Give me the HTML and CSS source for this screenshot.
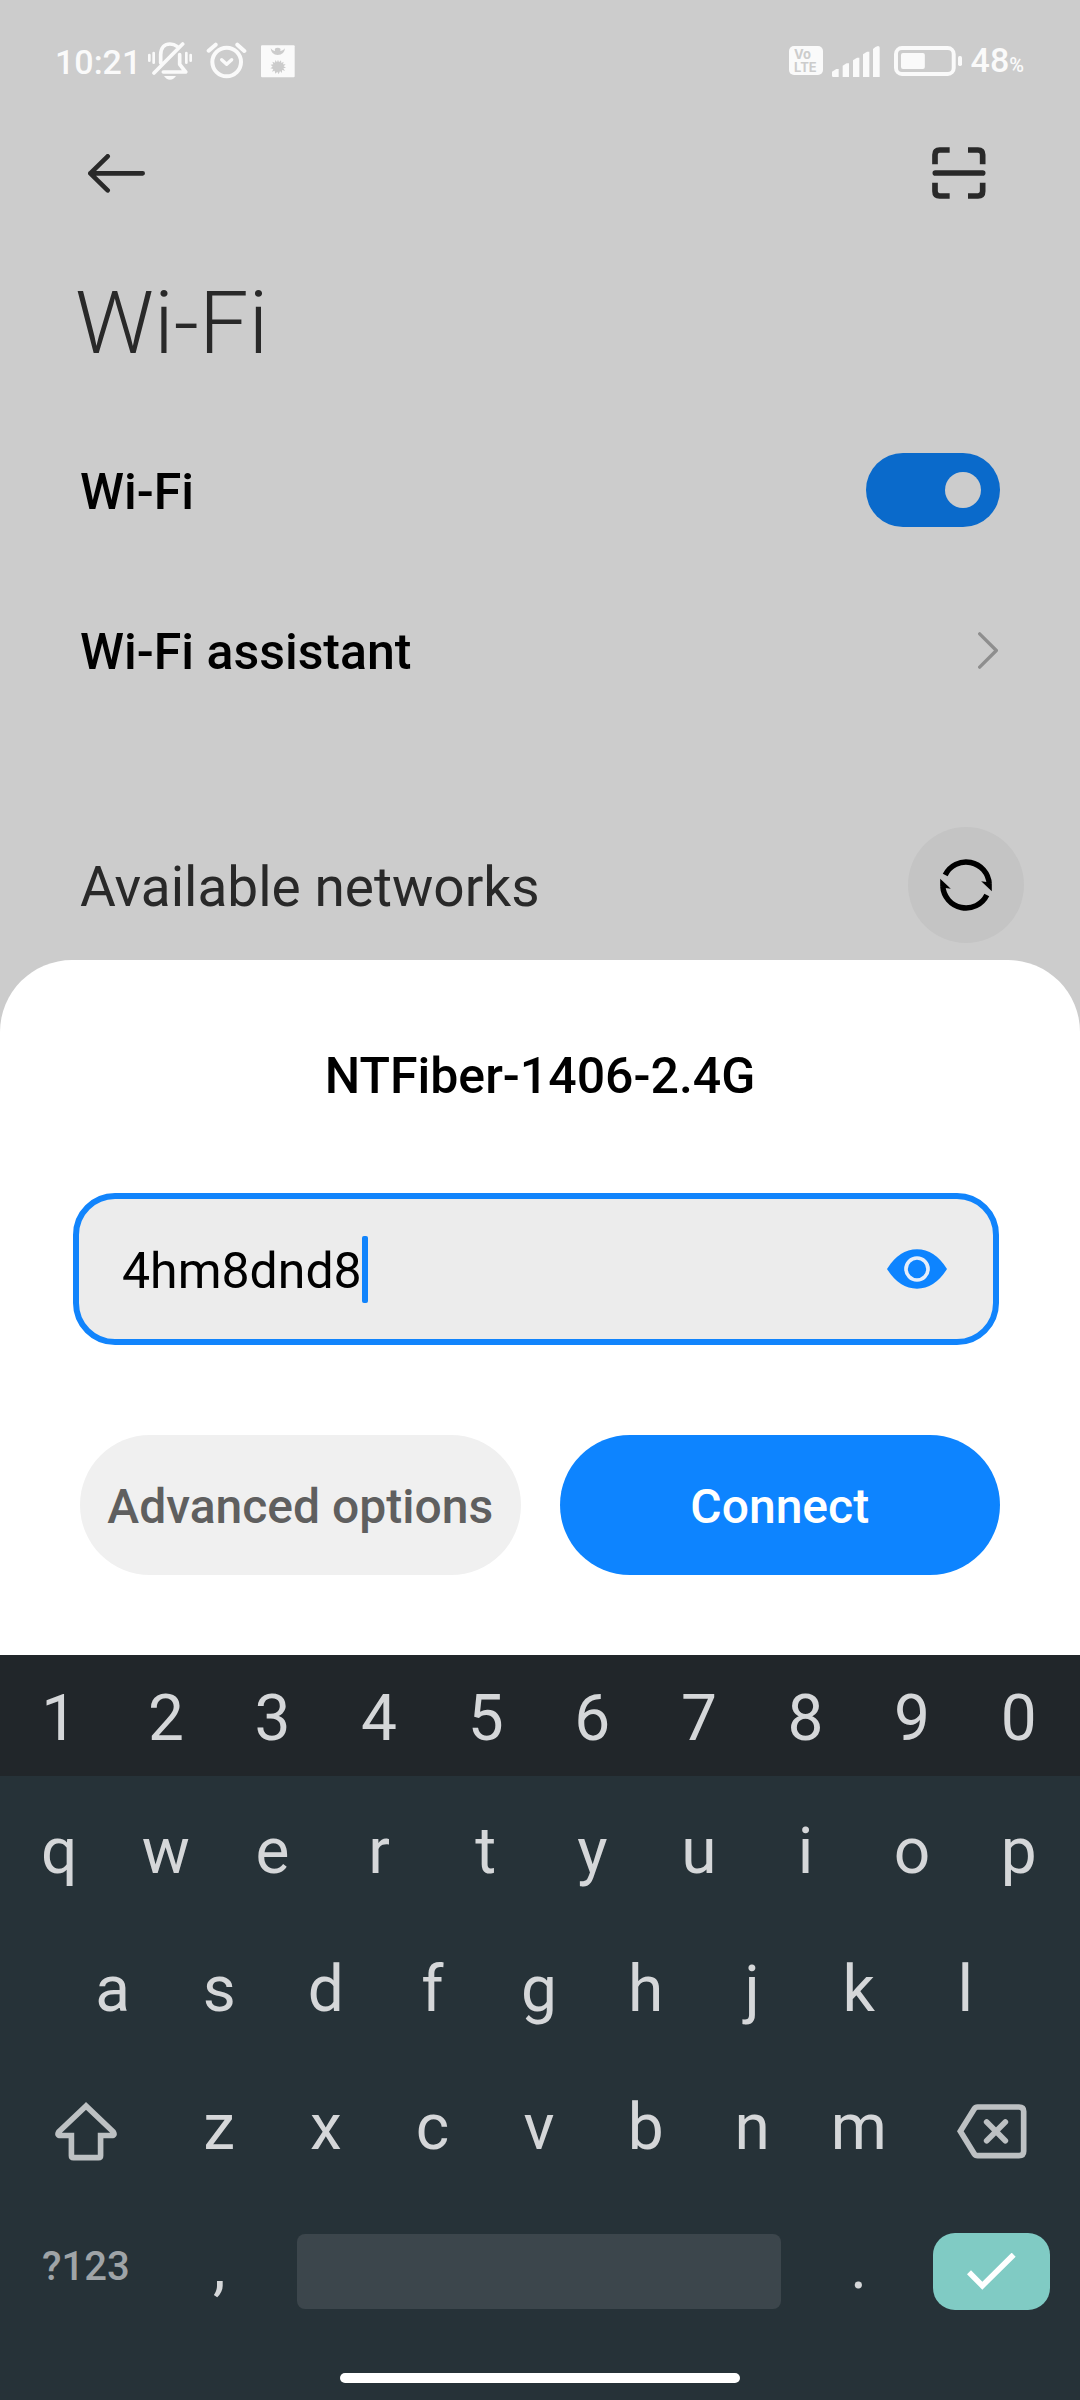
FILE: index.html
```html
<!DOCTYPE html>
<html lang="en">
<head>
<meta charset="utf-8">
<meta name="viewport" content="width=device-width, initial-scale=1">
<title>Wi-Fi</title>
<link rel="stylesheet" href="styles.css">
</head>
<body>
<header class="status">
  <div class="status-group status-left">
    <span class="status-text">10:21</span>
    <div class="status-group status-icons">
    <svg width="44" height="38" viewBox="324 36 132 114" fill="none" stroke="currentColor" stroke-width="11" stroke-linecap="round" stroke-linejoin="round" aria-hidden="true">
      <path d="M362 98V75C362 52 375 42 390 42C399 42 406 45 411 49M419 74V103L437 126H370M342 129L428 42"/>
      <path d="M328 75V92M341 69V98M439 69V98M452 75V92" stroke-width="8"/>
      <path d="M372 138H408Q401 149 390 149Q379 149 372 138Z" fill="currentColor" stroke="none"/>
    </svg>
    <svg width="41" height="38" viewBox="498 34 123 114" fill="none" stroke="currentColor" stroke-linecap="round" stroke-linejoin="round" aria-hidden="true">
      <circle cx="560" cy="94" r="43" stroke-width="12"/>
      <path d="M506 60L527 42M592 42L613 61" stroke-width="12"/>
      <path d="M545 87L560 101L575 87" stroke-width="10"/>
    </svg>
    <svg width="34" height="33" viewBox="664 43 102 99" aria-hidden="true">
      <rect x="664" y="44" width="101" height="96" rx="3" fill="currentColor"/>
      <g fill="#ccc">
        <path d="M693 53Q700 62 706 61Q703 51 714 51Q725 51 722 61Q729 62 736 53Q734 73 714 73Q695 73 693 53Z"/>
        <path d="M715 87L718 95L724 89L725 97L732 93L730 101L738 101L732 107L739 111L731 113L736 120L727 118L727 127L721 121L717 131L713 123L707 129L705 120L697 123L701 115L692 113L699 108L693 102L701 101L698 93L706 96L707 88L712 95Z"/>
      </g>
    </svg>
    </div>
  </div>
  <div class="status-group status-right">
    <svg width="34" height="30" viewBox="0 0 34 30" aria-label="VoLTE">
      <rect width="34" height="29" rx="5" fill="currentColor"/>
      <g fill="#ccc" class="volte">
        <text x="5" y="13">Vo</text>
        <text x="5" y="26">LTE</text>
      </g>
    </svg>
    <svg class="signal" width="48" height="31" viewBox="190 45 144 93" fill="currentColor" aria-hidden="true">
      <path d="M190 122L203 114H210V138H194Q190 138 190 134Z"/>
      <path d="M222 104L234 97H241V138H222Z"/>
      <path d="M253 88L265 80H272V138H253Z"/>
      <path d="M283 70L295 62H302V138H283Z"/>
      <path d="M313 54Q320 47 328 45Q333 45 333 50V138H313Z"/>
    </svg>
    <svg width="68" height="30" viewBox="375 45 205 90" aria-hidden="true">
      <rect x="381" y="51" width="174" height="78" rx="18" fill="none" stroke="currentColor" stroke-width="12"/>
      <rect x="396" y="66" width="72" height="48" rx="6" fill="currentColor"/>
      <rect x="568" y="75" width="12" height="30" rx="5" fill="currentColor"/>
    </svg>
    <span class="status-text">48<span class="percent">%</span></span>
  </div>
</header>

<nav class="toolbar">
  <button class="icon-button" type="button" aria-label="Back">
    <svg width="57" height="39" viewBox="114 72 171 117" fill="none" stroke="currentColor" stroke-width="14" stroke-linecap="round" stroke-linejoin="round"><path d="M121 130H278M173 79L121 130L173 181"/></svg>
  </button>
  <button class="icon-button" type="button" aria-label="Scan QR code">
    <svg width="54" height="52" viewBox="276 79 162 156" fill="none" stroke="currentColor" stroke-width="17">
      <path d="M285 131V102Q285 88 299 88H329M384 88H414Q428 88 428 102V131M285 186V212Q285 226 299 226H329M384 226H414Q428 226 428 212V186"/>
      <path d="M286 157H428" stroke-linecap="round"/>
    </svg>
  </button>
</nav>

<main class="settings">
  <h1 class="title">Wi-Fi</h1>
  <div class="row">
    <label class="row-label" for="wifi">Wi-Fi</label>
    <input class="switch" id="wifi" type="checkbox" role="switch" checked>
  </div>
  <a class="row row-link" href="#assistant">
    <span class="row-label">Wi-Fi assistant</span>
    <svg width="20" height="37" viewBox="414 606 60 110" fill="none" stroke="#8e8e8e" stroke-width="10" stroke-linecap="round" stroke-linejoin="round" aria-hidden="true"><path d="M419 611L469 661L419 711"/></svg>
  </a>
  <div class="networks">
    <h2 class="networks-title">Available networks</h2>
    <button class="refresh" type="button" aria-label="Refresh">
      <svg width="54" height="54" viewBox="-27 -27 54 54" fill="none" stroke="currentColor" stroke-width="5.4">
        <path d="M-20.8 -10A23.2 23.2 0 0 1 23.2 -1"/>
        <path d="M20.8 10A23.2 23.2 0 0 1 -23.2 1"/>
        <path d="M15.2 -3.7L20.5 -3L25.8 -1V6.3Z M-15.2 3.7L-20.5 3L-25.8 1V-6.3Z" fill="currentColor" stroke="none"/>
      </svg>
    </button>
  </div>
</main>

<form class="sheet">
  <h2 class="sheet-title" id="network">NTFiber-1406-2.4G</h2>
  <div class="field">
    <input class="password" type="text" value="4hm8dnd8" aria-labelledby="network" autocomplete="off" spellcheck="false">
    <span class="caret"></span>
    <button class="eye" type="button" aria-label="Hide password">
      <svg width="60" height="40" viewBox="111 207 180 120">
        <path d="M111 267Q148 208 201 208Q254 208 291 267Q254 326 201 326Q148 326 111 267Z" fill="#0d84ff"/>
        <circle cx="201" cy="267" r="33" fill="none" stroke="#e6eefa" stroke-width="11"/>
      </svg>
    </button>
  </div>
  <div class="actions">
    <button class="action" type="button">Advanced options</button>
    <button class="action action-primary" type="button">Connect</button>
  </div>
</form>

<section class="keyboard" aria-label="Keyboard">
  <div class="keys keys-numbers">
    <button class="key" type="button">1</button><button class="key" type="button">2</button><button class="key" type="button">3</button><button class="key" type="button">4</button><button class="key" type="button">5</button><button class="key" type="button">6</button><button class="key" type="button">7</button><button class="key" type="button">8</button><button class="key" type="button">9</button><button class="key" type="button">0</button>
  </div>
  <div class="keys keys-first">
    <button class="key" type="button">q</button><button class="key" type="button">w</button><button class="key" type="button">e</button><button class="key" type="button">r</button><button class="key" type="button">t</button><button class="key" type="button">y</button><button class="key" type="button">u</button><button class="key" type="button">i</button><button class="key" type="button">o</button><button class="key" type="button">p</button>
  </div>
  <div class="keys">
    <button class="key key-indent" type="button">a</button><button class="key" type="button">s</button><button class="key" type="button">d</button><button class="key" type="button">f</button><button class="key" type="button">g</button><button class="key" type="button">h</button><button class="key" type="button">j</button><button class="key" type="button">k</button><button class="key" type="button">l</button>
  </div>
  <div class="keys">
    <button class="key key-wide key-icon" type="button" aria-label="Shift">
      <svg width="62" height="59" viewBox="164 122 186 178" fill="none" stroke="currentColor" stroke-width="17"><path d="M257 134L175 212Q168 223 180 223H213V284Q213 290 219 290H295Q301 290 301 284V223H334Q346 223 339 212Z"/></svg>
    </button>
    <button class="key" type="button">z</button><button class="key" type="button">x</button><button class="key" type="button">c</button><button class="key" type="button">v</button><button class="key" type="button">b</button><button class="key" type="button">n</button><button class="key" type="button">m</button>
    <button class="key key-wide key-icon" type="button" aria-label="Backspace">
      <svg width="70" height="55" viewBox="774 138 210 165" fill="none" stroke="currentColor" stroke-width="17"><path d="M784 220L826 152Q829 147 836 147H960Q974 147 974 160V280Q974 293 960 293H836Q829 293 826 288Z"/><path d="M863 192L919 248M919 192L863 248" stroke-linecap="round"/></svg>
    </button>
  </div>
  <div class="keys keys-bottom">
    <button class="key key-wide key-symbols" type="button">?123</button>
    <button class="key key-punct" type="button">,</button>
    <button class="space" type="button" aria-label="Space"></button>
    <button class="key key-punct" type="button">.</button>
    <button class="enter" type="button" aria-label="Done">
      <svg width="49" height="37" viewBox="808 580 147 111" fill="none" stroke="#fff" stroke-width="17"><path d="M814 638L854 678L948 585"/></svg>
    </button>
  </div>
  <div class="home-bar"></div>
</section>
</body>
</html>
```

FILE: styles.css
```css
* { box-sizing: border-box; }

body {
  margin: 0;
  min-height: 100vh;
  display: flex;
  flex-direction: column;
  background: #ccc;
  color: #000;
  font-family: Roboto, "Liberation Sans", sans-serif;
}

button, input {
  margin: 0;
  padding: 0;
  border: 0;
  background: none;
  color: inherit;
  font: inherit;
  outline: 0;
}

h1, h2 { margin: 0; }
svg { display: block; flex: none; }

/* Status bar */
.status {
  height: 122px;
  padding: 0 56px 0 55px;
  display: flex;
  align-items: center;
  justify-content: space-between;
  color: #fafafa;
}
.status-group { display: flex; align-items: center; }
.status-left { gap: 7px; }
.status-icons { gap: 14px; }
.status-right { gap: 9px; }
.signal { margin-right: 5px; }
.status-text { padding-top: 2px; font-size: 34px; line-height: 40px; font-weight: 500; }
.percent { font-size: 20px; }
.volte { font-family: Inter, sans-serif; font-size: 13px; font-weight: 700; }

/* Toolbar */
.toolbar {
  height: 102px;
  padding: 0 94px 0 88px;
  display: flex;
  align-items: center;
  justify-content: space-between;
  color: #292929;
}
.icon-button { display: flex; }

/* Settings list */
.title {
  padding: 47px 75px 35px;
  font-size: 88px;
  line-height: 104px;
  font-weight: 300;
  color: #292929;
}
.row {
  height: 160px;
  padding: 0 80px;
  display: flex;
  align-items: center;
  justify-content: space-between;
  color: inherit;
  text-decoration: none;
}
.row-link { padding-right: 82px; }
.row-label { padding-top: 4px; font-size: 50px; line-height: 56px; font-weight: 500; }
.switch {
  appearance: none;
  width: 134px;
  height: 74px;
  padding: 0 19px;
  display: flex;
  align-items: center;
  border-radius: 37px;
  background: #0a6acb;
}
.switch::before {
  content: "";
  width: 36px;
  height: 36px;
  border-radius: 50%;
  background: #ccc;
}
.switch:checked::before { margin-left: auto; }
.networks {
  height: 150px;
  margin-top: 80px;
  padding: 0 56px 0 80px;
  display: flex;
  align-items: center;
  justify-content: space-between;
}
.networks-title {
  padding-top: 4px;
  font-size: 55px;
  line-height: 64px;
  font-weight: 400;
  color: #292929;
}
.refresh {
  width: 116px;
  height: 116px;
  display: grid;
  place-items: center;
  border-radius: 50%;
  background: #c4c4c4;
}

/* Password sheet */
.sheet {
  padding: 88px 0 80px;
  border-radius: 72px 72px 0 0;
  background: #fff;
}
.sheet-title {
  font-size: 50px;
  line-height: 56px;
  font-weight: 500;
  text-align: center;
}
.field {
  height: 152px;
  margin: 89px 81px 90px 73px;
  padding: 0 46px 0 43px;
  display: flex;
  align-items: center;
  border: 6px solid #1184fc;
  border-radius: 42px;
  background: #ececec;
}
.password { padding-top: 4px; field-sizing: content; font-size: 50px; line-height: 60px; }
.caret { width: 6px; height: 67px; border-radius: 2px; background: #1184fc; }
.eye { display: flex; margin-left: auto; }
.actions {
  padding: 0 80px;
  display: grid;
  grid-template-columns: 1fr 1fr;
  gap: 39px;
}
.action {
  height: 140px;
  padding-top: 4px;
  border-radius: 70px;
  background: #f0f0f0;
  color: #5f5f5f;
  font-size: 48px;
  line-height: 56px;
  font-weight: 500;
  white-space: nowrap;
}
.action-primary { background: #0d84ff; color: #fff; }

/* Keyboard: each row is twenty half-key columns */
.keyboard {
  flex: 1;
  background: #263238;
  color: #d5d7d9;
}
.keys {
  height: 138px;
  padding: 0 8px 0 6px;
  display: grid;
  grid-template-columns: repeat(20, 1fr);
  align-items: center;
}
.keys-numbers { height: 121px; padding-top: 4px; background: #21262a; }
.keys-first { margin-top: 5px; }
.key {
  grid-column: span 2;
  padding-top: 3px;
  display: flex;
  justify-content: center;
  font-size: 64px;
  line-height: 76px;
}
.key-indent { grid-column: 2 / span 2; }
.key-wide { grid-column: span 3; }
.key-icon { padding-top: 10px; color: #bdc1c3; }
.keys-bottom { height: 152px; }
.key-punct { padding: 0 0 8px; }
.key-symbols {
  padding: 0 0 8px;
  color: #9fa4a7;
  font-size: 40px;
  font-weight: 500;
}
.space {
  grid-column: span 10;
  height: 75px;
  margin: 0 25px;
  border-radius: 8px;
  background: #3c464c;
}
.enter {
  grid-column: span 3;
  height: 77px;
  margin: 0 22px 0 21px;
  display: grid;
  place-items: center;
  border-radius: 22px;
  background: #80cbc4;
}
.home-bar {
  width: 37%;
  height: 10px;
  margin: 26px auto 17px;
  border-radius: 5px;
  background: #fff;
}
```
